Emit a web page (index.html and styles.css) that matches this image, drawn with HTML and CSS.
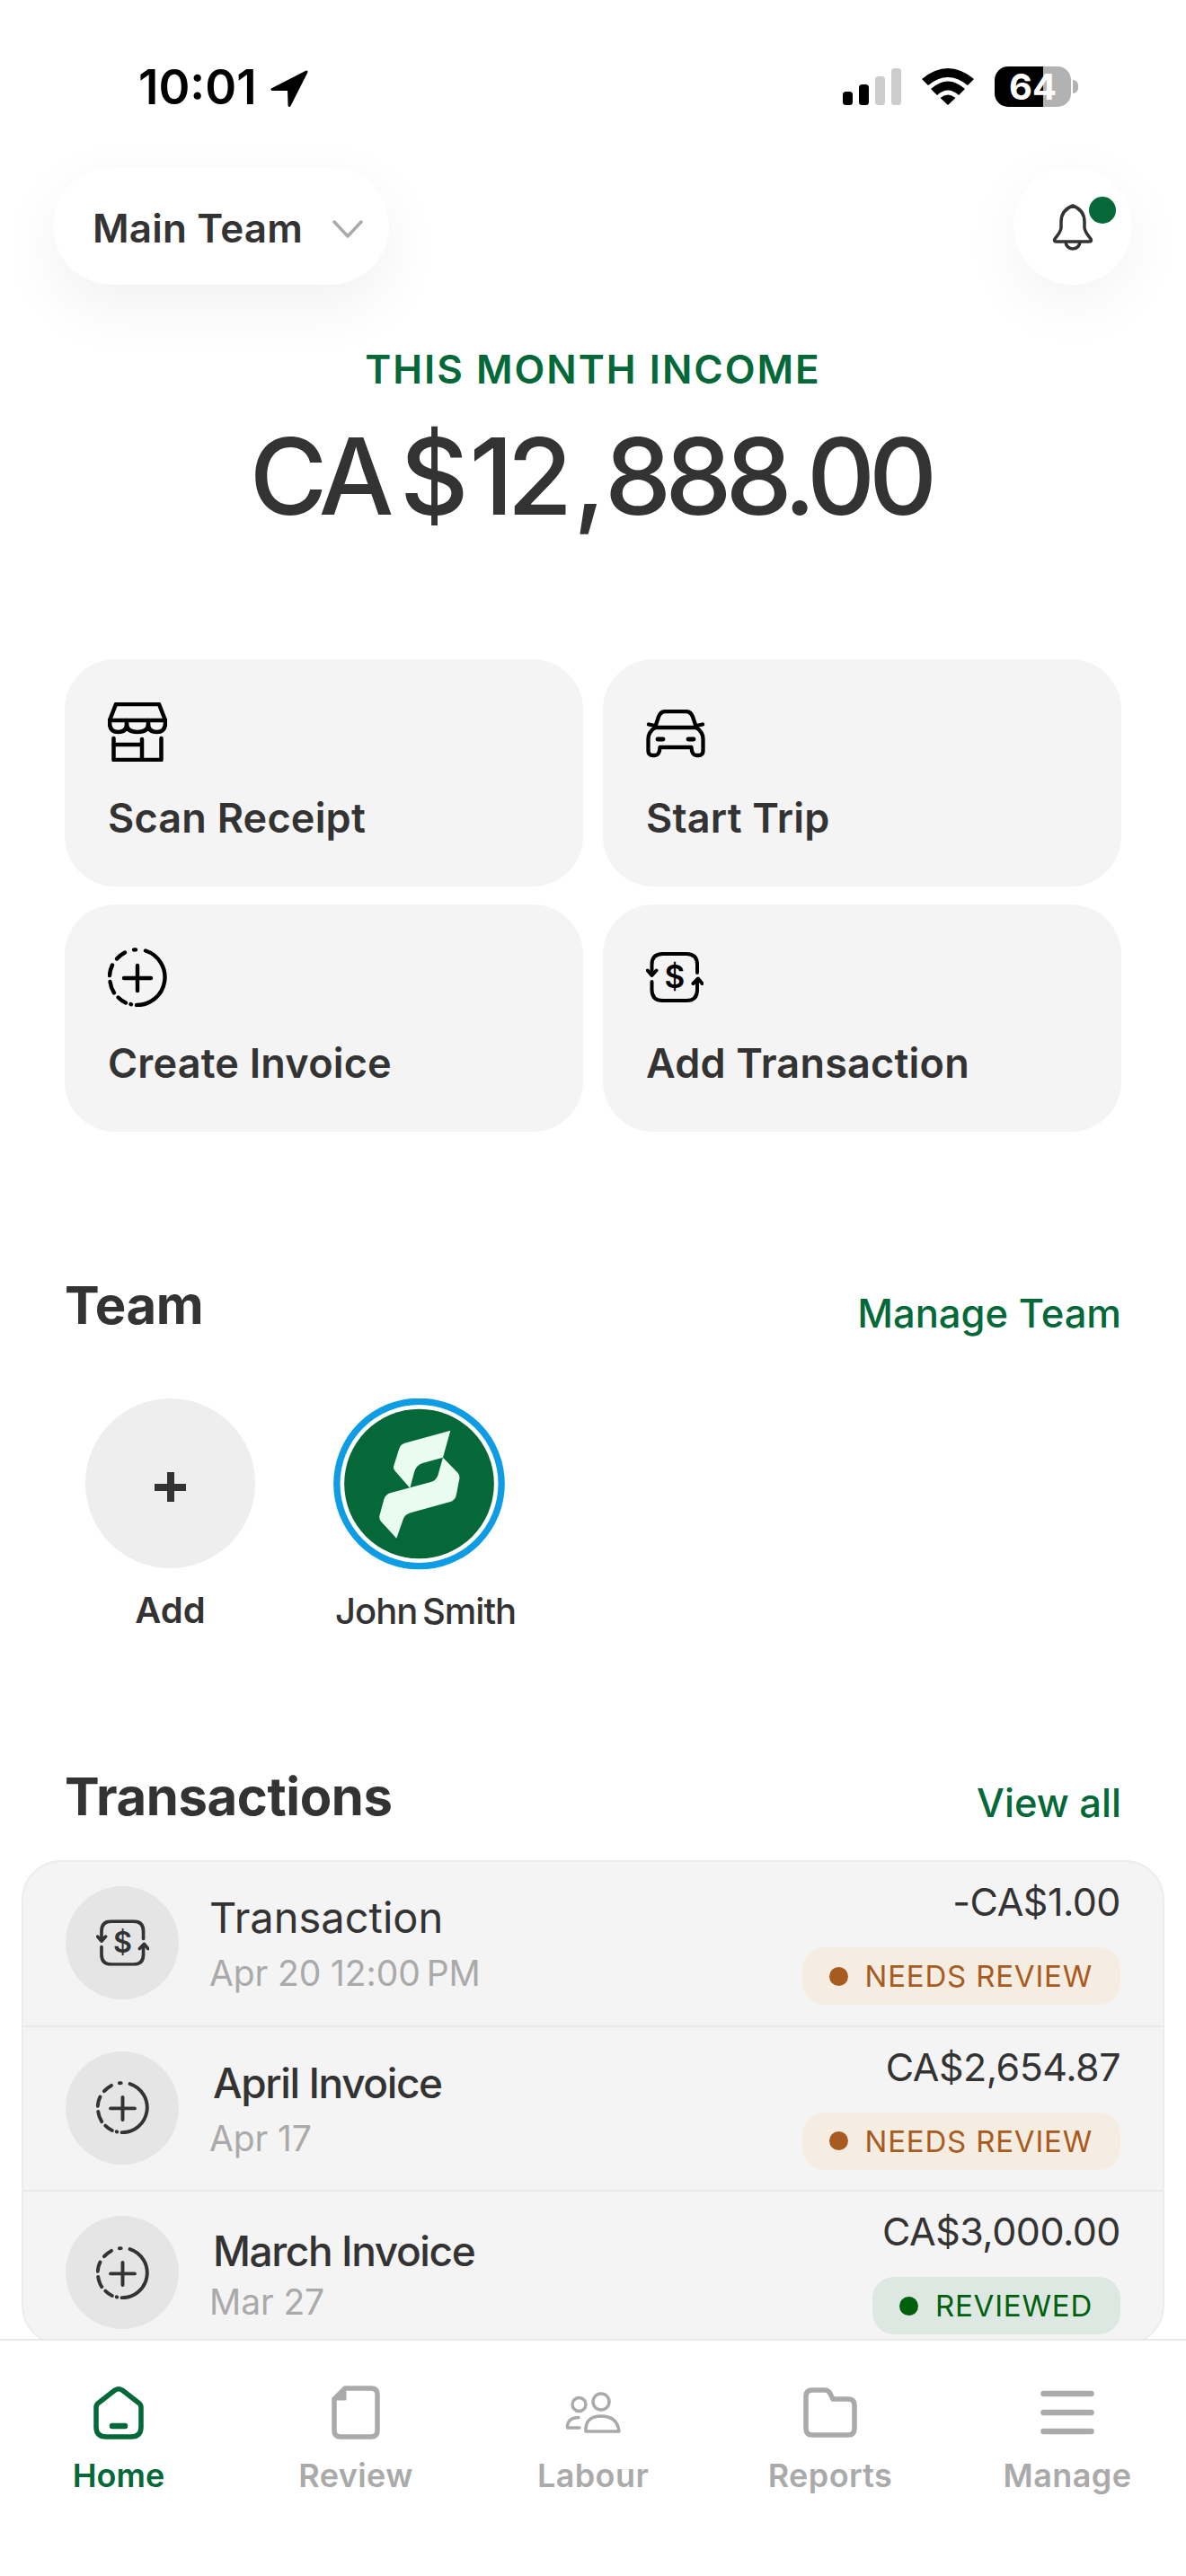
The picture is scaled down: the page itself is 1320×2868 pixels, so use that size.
FILE: index.html
```html
<!DOCTYPE html>
<html lang="en">
<head>
<meta charset="utf-8">
<title>Home</title>
<link rel="stylesheet" href="styles.css">
</head>
<body>
<svg class="defs" width="0" height="0" aria-hidden="true">
  <symbol id="i-plus" viewBox="0 0 66 66">
    <g fill="none" stroke="currentColor" stroke-width="4.4" stroke-linecap="round">
      <path d="M42 3.500A31 31 0 0 1 32 64"/>
      <path d="M25.500 63L26 63.200"/>
      <path d="M11.500 55.500A31 31 0 0 0 20 61.500"/>
      <path d="M2.500 38A31 31 0 0 0 7 50.500"/>
      <path d="M2 31A31 31 0 0 1 5 19.500"/>
      <path d="M10 12.500A31 31 0 0 1 19 5.500"/>
      <path d="M29 2.500L31 2.400"/>
      <path d="M33 20V48M18 34H48"/>
    </g>
  </symbol>
  <symbol id="i-money" viewBox="0 0 64 56">
    <g fill="none" stroke="currentColor" stroke-width="4" stroke-linecap="round" stroke-linejoin="round">
      <path d="M6.500 24V14Q6.500 2 18.500 2H45Q57 2 57 14V23"/>
      <path d="M6.500 33V42Q6.500 54 18.500 54H45Q57 54 57 42V31"/>
      <path d="M1.800 20.500L6.500 26L11.500 20.500"/>
      <path d="M52.500 35L58 29.500L62.500 35"/>
    </g>
  </symbol>
</svg>

<div class="app">
  <main class="main">
    <div class="status">
      <div class="status-left">
        <span class="time">10:01</span>
        <svg class="arrow" width="42" height="41" viewBox="0 0 42 41"><path d="M40 2L2 21.500H20.500L21 39.500Z" fill="#000" stroke="#000" stroke-width="3" stroke-linejoin="round"/></svg>
      </div>
      <div class="status-right">
        <svg width="65" height="41" viewBox="0 0 65 41">
          <rect x="0" y="26" width="11" height="15" rx="3.500" fill="#000"/>
          <rect x="18" y="18" width="11" height="23" rx="3.500" fill="#000"/>
          <rect x="36" y="9" width="11" height="32" rx="3.500" fill="#ccc"/>
          <rect x="54" y="0" width="11" height="41" rx="3.500" fill="#ccc"/>
        </svg>
        <svg class="wifi" width="58" height="42" viewBox="0 0 58 42">
          <path d="M0 13Q29 -11 58 13L51 20Q29 2 7 20Z" fill="#000"/>
          <path d="M10 24Q29 7 48 24L41 31Q29 20 17 31Z" fill="#000"/>
          <path d="M20.500 34Q29 27 37.500 34L29 42Z" fill="#000"/>
        </svg>
        <div class="battery">64</div>
      </div>
    </div>

    <header class="topbar">
      <button class="team-pill">
        <span>Main Team</span>
        <svg width="34" height="20" viewBox="0 0 34 20"><path d="M2 2L17 18L32 2" fill="none" stroke="#aaa" stroke-width="3.500" stroke-linecap="round" stroke-linejoin="round"/></svg>
      </button>
      <button class="bell">
        <svg width="46" height="52" viewBox="0 0 46 52">
          <path d="M23 2C15 5 10 11 10 20V26C10 31 6 35 3 39Q1.500 42 5 42H41Q44.500 42 43 39C40 35 36 31 36 26V20C36 11 31 5 23 2Z" fill="none" stroke="#333" stroke-width="3.500" stroke-linejoin="round"/>
          <path d="M15 42A8 8 0 0 0 31 42" fill="none" stroke="#333" stroke-width="3.500"/>
        </svg>
        <span class="bell-dot"></span>
      </button>
    </header>

    <section class="income">
      <div class="income-label">THIS MONTH INCOME</div>
      <div class="income-value">CA<span class="gap-a">$</span><span class="gap-b">12</span><span class="gap-c">,</span>888.00</div>
    </section>

    <section class="actions">
      <button class="action">
        <span class="action-icon">
          <svg width="66" height="66" viewBox="0 0 66 66">
            <g fill="none" stroke="#000" stroke-width="4.500" stroke-linecap="round" stroke-linejoin="round">
              <path d="M9 2H57L64 20H2Z"/>
              <path d="M2 20V23Q2 33 11.500 33Q21 33 21 24Q21 33 33 33Q45 33 45 24Q45 33 54.500 33Q64 33 64 23V20"/>
              <path d="M21 20V24M45 20V24"/>
              <path d="M6.500 40V64H59.500V40"/>
              <path d="M6.500 47H38M38 41V64"/>
            </g>
          </svg>
        </span>
        <span class="action-label">Scan Receipt</span>
      </button>
      <button class="action">
        <span class="action-icon">
          <svg class="car" width="66" height="54" viewBox="0 0 66 54">
            <g fill="none" stroke="#000" stroke-width="4.300" stroke-linecap="round" stroke-linejoin="round">
              <path d="M10 20L14 8Q16 2 22 2H44Q50 2 52 8L56 20"/>
              <path d="M3 16.500L10 18M63 16.500L56 18"/>
              <path d="M10 20Q2.500 25 2.500 33V46Q2.500 51 8 51H10Q15 51 15.500 42H50.500Q51 51 56 51H58Q63.500 51 63.500 46V33Q63.500 25 56 20Z"/>
              <path d="M13 33H19M47 33H53" stroke-width="4.800"/>
            </g>
          </svg>
        </span>
        <span class="action-label">Start Trip</span>
      </button>
      <button class="action">
        <span class="action-icon"><svg class="ico-black" width="66" height="66"><use href="#i-plus"/></svg></span>
        <span class="action-label">Create Invoice</span>
      </button>
      <button class="action">
        <span class="action-icon"><svg class="ico-black ico-money" width="64" height="56" viewBox="0 0 64 56"><use href="#i-money" width="64" height="56"/><text x="32" y="40" class="dollar" text-anchor="middle">$</text></svg></span>
        <span class="action-label">Add Transaction</span>
      </button>
    </section>

    <section class="team">
      <div class="section-head">
        <h2>Team</h2>
        <a class="link link-team">Manage Team</a>
      </div>
      <div class="members">
        <div class="member member-add">
          <div class="add-circle"><span class="add-plus"></span></div>
          <div class="member-name add-name">Add</div>
        </div>
        <div class="member member-john">
          <svg class="avatar" width="191" height="191" viewBox="62 78 573 573">
            <circle cx="348.500" cy="363" r="275" fill="#fff" stroke="#0e9de5" stroke-width="22"/>
            <circle cx="348.500" cy="363" r="250" fill="#046838"/>
            <path d="M453 185L300 227Q286 231 282 245L263 305Q261 313 268 320L318 377L332 325Q338 301 360 294L428 275Z" fill="#eafbef"/>
            <path d="M428 275L476 325Q485 334 483 346L473 398Q470 418 450 424L320 460Q300 466 295 482L273 545L222 490Q214 481 216 470L231 415Q236 398 254 393L385 358Q405 352 411 335Z" fill="#eafbef"/>
          </svg>
          <div class="member-name john-name">John Smith</div>
        </div>
      </div>
    </section>

    <section class="transactions">
      <div class="section-head section-head-tx">
        <h2>Transactions</h2>
        <a class="link link-tx">View all</a>
      </div>
      <div class="tx-card">
        <div class="tx-row">
          <div class="tx-icon"><svg class="ico-dark" width="59" height="52" viewBox="0 0 64 56"><use href="#i-money" width="64" height="56"/><text x="32" y="40" class="dollar" text-anchor="middle">$</text></svg></div>
          <div class="tx-main">
            <div class="tx-title">Transaction</div>
            <div class="tx-date">Apr 20 12:00&#8201;PM</div>
          </div>
          <div class="tx-side">
            <div class="tx-amount">-CA$1.00</div>
            <div class="badge badge-warn"><span class="badge-dot"></span>NEEDS REVIEW</div>
          </div>
        </div>
        <div class="tx-row">
          <div class="tx-icon"><svg class="ico-dark" width="59" height="59"><use href="#i-plus"/></svg></div>
          <div class="tx-main">
            <div class="tx-title tx-title-tight">April Invoice</div>
            <div class="tx-date">Apr 17</div>
          </div>
          <div class="tx-side">
            <div class="tx-amount">CA$2,654.87</div>
            <div class="badge badge-warn"><span class="badge-dot"></span>NEEDS REVIEW</div>
          </div>
        </div>
        <div class="tx-row tx-row-last">
          <div class="tx-icon"><svg class="ico-dark" width="59" height="59"><use href="#i-plus"/></svg></div>
          <div class="tx-main tx-main-last">
            <div class="tx-title tx-title-tight">March Invoice</div>
            <div class="tx-date">Mar 27</div>
          </div>
          <div class="tx-side">
            <div class="tx-amount">CA$3,000.00</div>
            <div class="badge badge-ok"><span class="badge-dot"></span>REVIEWED</div>
          </div>
        </div>
      </div>
    </section>
  </main>

  <nav class="nav">
    <a class="nav-item nav-active">
      <span class="nav-icon">
        <svg width="58" height="60" viewBox="0 0 58 60">
          <path d="M4 24Q4 21 7 19L25 5Q29 2.500 33 5L51 19Q54 21 54 24V46Q54 57 43 57H15Q4 57 4 46Z" fill="none" stroke="currentColor" stroke-width="5.500" stroke-linejoin="round"/>
          <path d="M22 45H36" stroke="currentColor" stroke-width="6.500" stroke-linecap="round"/>
        </svg>
      </span>
      <span>Home</span>
    </a>
    <a class="nav-item">
      <span class="nav-icon">
        <svg width="54" height="60" viewBox="0 0 54 60">
          <path d="M15 3H44Q51 3 51 10V50Q51 57 44 57H10Q3 57 3 50V15Z" fill="none" stroke="currentColor" stroke-width="5.500" stroke-linejoin="round"/>
          <path d="M15 3V15H3Z" fill="currentColor" stroke="currentColor" stroke-width="3" stroke-linejoin="round"/>
        </svg>
      </span>
      <span>Review</span>
    </a>
    <a class="nav-item">
      <span class="nav-icon">
        <svg width="62" height="46" viewBox="0 0 62 46">
          <g fill="none" stroke="currentColor" stroke-width="3.500" stroke-linecap="round" stroke-linejoin="round">
            <circle cx="40" cy="11" r="9"/>
            <circle cx="15.500" cy="14" r="7.500"/>
            <path d="M23 44Q22 27 40 27Q58 27 60 44Z"/>
            <path d="M16 40H2.500Q2 29 15 28.500"/>
          </g>
        </svg>
      </span>
      <span>Labour</span>
    </a>
    <a class="nav-item">
      <span class="nav-icon">
        <svg width="60" height="56" viewBox="0 0 60 56">
          <path d="M3 10Q3 3 10 3H24Q28 3 30 7L33 13H50Q57 13 57 20V46Q57 53 50 53H10Q3 53 3 46Z" fill="none" stroke="currentColor" stroke-width="5.500" stroke-linejoin="round"/>
        </svg>
      </span>
      <span>Reports</span>
    </a>
    <a class="nav-item">
      <span class="nav-icon">
        <svg width="60" height="50" viewBox="0 0 60 50">
          <path d="M3.500 4H56.500M3.500 25H56.500M3.500 46H56.500" fill="none" stroke="currentColor" stroke-width="6.500" stroke-linecap="round"/>
        </svg>
      </span>
      <span>Manage</span>
    </a>
  </nav>
</div>
</body>
</html>
```

FILE: styles.css
```css
* { box-sizing: border-box; }
html, body { margin: 0; padding: 0; background: #fff; }
body { font-family: Inter, "Liberation Sans", sans-serif; color: #333; }
.defs { position: absolute; }
button { font: inherit; color: inherit; border: 0; background: none; padding: 0; text-align: left; }
h2 { margin: 0; font-size: 58px; line-height: 70px; font-weight: 700; letter-spacing: -0.4px; color: #333; }

.app { width: 1320px; height: 2868px; display: flex; flex-direction: column; overflow: hidden; background: #fff; }
.main { height: 2604px; flex: none; overflow: hidden; }

.status { height: 186px; display: flex; justify-content: space-between; padding: 0 119px 0 154px; }
.status-left { display: flex; align-items: flex-start; gap: 15px; padding-top: 67px; }
.time { font-size: 53px; line-height: 60px; font-weight: 600; color: #000; letter-spacing: 0; }
.arrow { margin-top: 11px; }
.status-right { display: flex; align-items: flex-start; padding-top: 76px; }
.wifi { margin-left: 23px; margin-top: -1px; }
.battery { position: relative; width: 85px; height: 45px; margin-left: 23px; margin-top: -2px; margin-right: 9px; border-radius: 15px; background: linear-gradient(90deg, #000 54px, #b2b2b2 54px); color: #fff; font-size: 40px; font-weight: 700; line-height: 46px; text-align: center; }
.battery::after { content: ""; position: absolute; left: 87px; top: 15px; width: 6px; height: 15px; border-radius: 0 8px 8px 0; background: #b2b2b2; }

.topbar { height: 131px; display: flex; justify-content: space-between; padding: 0 60px 0 59px; }
.team-pill { width: 374px; height: 131px; border-radius: 66px; background: #fff; box-shadow: 0 24px 70px rgba(0,0,0,.06); display: flex; align-items: center; gap: 33px; padding: 4px 0 0 44px; font-size: 44px; font-weight: 600; letter-spacing: .2px; color: #333; }
.team-pill svg { margin-top: 3px; }
.bell { position: relative; width: 132px; height: 131px; border-radius: 50%; background: #fff; box-shadow: 0 20px 70px rgba(0,0,0,.05); display: flex; align-items: center; justify-content: center; }
.bell svg { margin-top: 2px; }
.bell-dot { position: absolute; left: 84px; top: 33px; width: 30px; height: 30px; border-radius: 50%; background: #046838; }

.income { text-align: center; }
.income-label { margin-top: 67px; font-size: 44px; line-height: 54px; font-weight: 600; letter-spacing: 2px; color: #046838; }
.income-value { margin-top: 32px; padding-right: 6px; font-size: 118px; line-height: 120px; font-weight: 500; letter-spacing: -7px; color: #333; }
.gap-a { margin-left: 14px; }
.gap-b { margin-left: 8px; }
.gap-c { margin-left: 8px; margin-right: 6px; }

.actions { margin-top: 144px; padding: 0 72px; display: grid; grid-template-columns: 577px 577px; grid-auto-rows: 253px; column-gap: 22px; row-gap: 20px; }
.action { background: #f4f4f4; border-radius: 56px; padding: 48px 48px 0; display: flex; flex-direction: column; align-items: flex-start; }
.action-icon { height: 70px; display: block; }
.action-icon svg { display: block; }
.action-icon .car { margin-top: 8px; }
.action-icon .ico-money { margin-top: 5px; }
.action-label { margin-top: 32px; font-size: 45px; line-height: 54px; font-weight: 600; letter-spacing: .2px; color: #333; }
.ico-black { color: #000; }
.ico-dark { color: #333; }
.dollar { font-family: Inter, sans-serif; font-size: 35px; font-weight: 600; fill: currentColor; }

.team { margin-top: 158px; }
.section-head { display: flex; justify-content: space-between; align-items: flex-start; padding: 0 72px; }
.link { font-size: 43.5px; line-height: 54px; font-weight: 500; color: #046838; }
.link-team { margin-top: 17px; }
.link-tx { margin-top: 15px; }
.members { margin-top: 68px; display: flex; padding-left: 95px; gap: 87px; }
.member { width: 189px; }
.member-john { width: 191px; }
.add-circle { width: 189px; height: 189px; border-radius: 50%; background: #eee; position: relative; }
.add-plus { position: absolute; left: 77px; top: 82px; width: 35px; height: 33px; background:
  linear-gradient(#333, #333) center / 35px 8px no-repeat,
  linear-gradient(#333, #333) center / 8px 33px no-repeat; }
.avatar { display: block; }
.member-name { margin-top: 22px; font-size: 40px; line-height: 48px; color: #333; white-space: nowrap; }
.add-name { margin-top: 23px; font-weight: 600; text-align: center; }
.john-name { font-weight: 500; letter-spacing: -1px; word-spacing: -4px; margin-left: 2px; }

.transactions { margin-top: 147px; }
.section-head-tx { height: 70px; }
.tx-card { margin: 36px 24px 0; background: #f4f4f4; border: 2px solid #ececec; border-radius: 44px; overflow: hidden; height: 540px; }
.tx-row { height: 183.5px; border-bottom: 2px solid #e9e9e9; display: flex; align-items: flex-start; padding: 27px 47px 0; }
.tx-row-last { border-bottom: 0; }
.tx-icon { width: 126px; height: 126px; border-radius: 50%; background: #e5e5e5; display: flex; align-items: center; justify-content: center; flex: none; }
.tx-main { margin-left: 34px; flex: 1; padding-top: 7px; }
.tx-main-last { padding-top: 11px; }
.tx-title { font-size: 47px; line-height: 56px; font-weight: 400; color: #333; }
.tx-title-tight { font-weight: 500; font-size: 46px; letter-spacing: -1.4px; margin-left: 4px; }
.tx-date { margin-top: 9px; font-size: 39px; line-height: 50px; letter-spacing: -.1px; color: #aaa; }
.tx-main-last .tx-date { margin-top: 4px; }
.tx-side { display: flex; flex-direction: column; align-items: flex-end; }
.tx-amount { font-size: 43px; line-height: 54px; letter-spacing: -.5px; color: #333; margin-top: -10px; }
.badge { margin-top: 24px; height: 64px; border-radius: 24px; display: flex; align-items: center; padding: 0 31px 0 30px; font-size: 33px; font-weight: 400; letter-spacing: .8px; }
.badge-dot { width: 21px; height: 21px; border-radius: 50%; margin-right: 19px; }
.badge-warn { background: #f5ede2; color: #a85b20; }
.badge-warn .badge-dot { background: #a85b20; }
.badge-ok { background: #dde8e3; color: #00600c; }
.badge-ok .badge-dot { background: #00600c; }

.nav { flex: 1; position: relative; background: #fff; border-top: 2px solid #e9e9e9; display: flex; padding-top: 48px; }
.nav-item { flex: 1; display: flex; flex-direction: column; align-items: center; font-size: 36px; line-height: 44px; font-weight: 600; color: #aaa; letter-spacing: .4px; }
.nav-icon { height: 64px; margin-bottom: 16px; display: flex; align-items: center; justify-content: center; }
.nav-active { color: #046838; letter-spacing: 0; }
```
